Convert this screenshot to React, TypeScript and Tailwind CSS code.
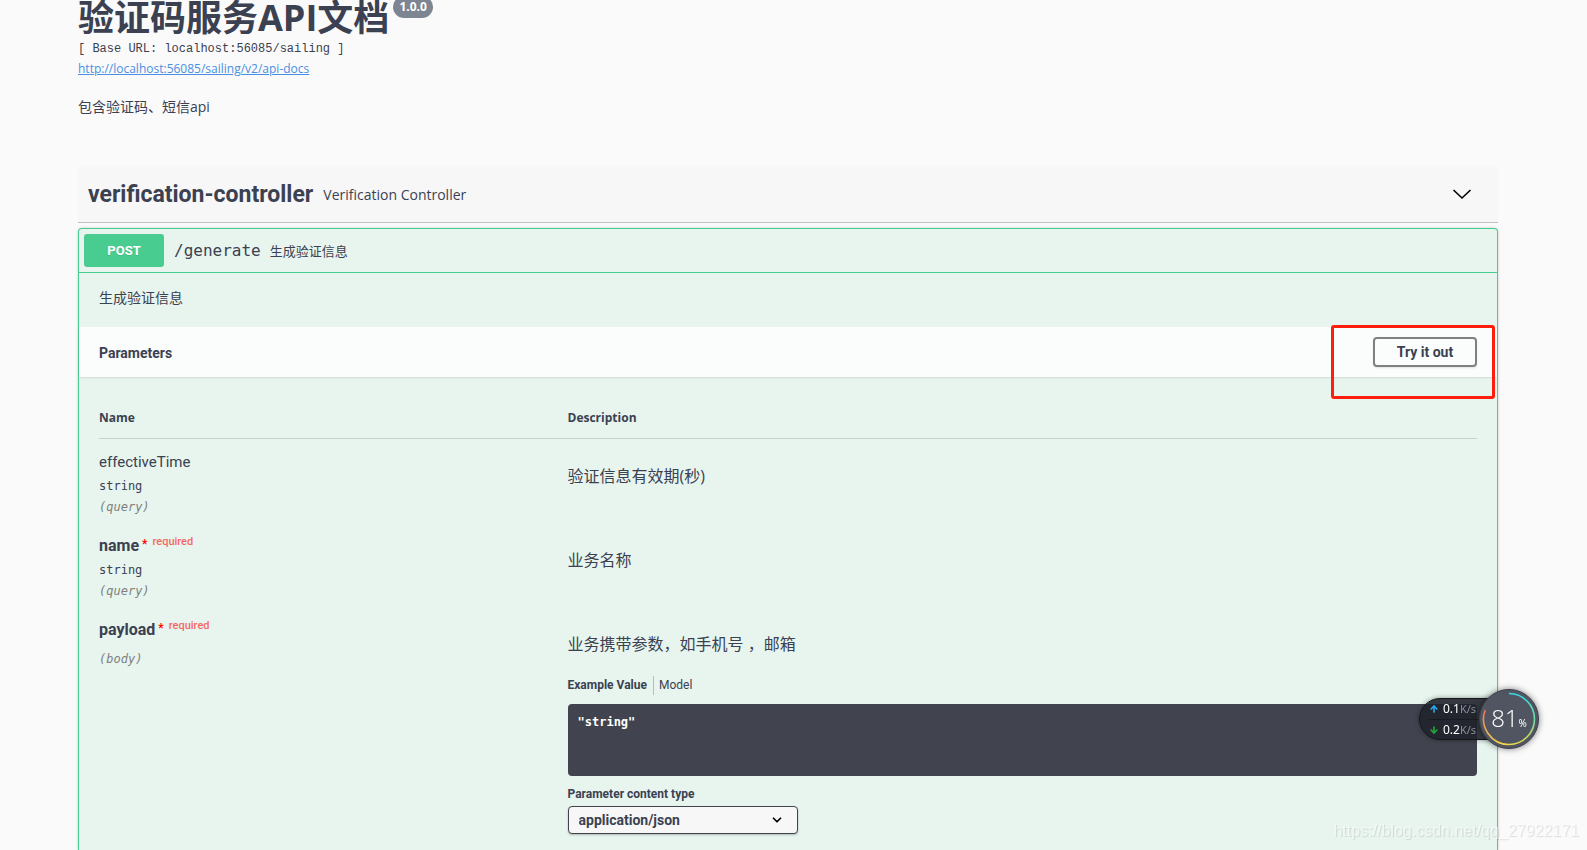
import React from "react";
import { ArrowDown, ArrowUp, ChevronDown } from "lucide-react";

interface Param {
	name: string;
	type?: string;
	location: string;
	required?: boolean;
	description: string;
}

const params: Param[] = [
	{
		name: "effectiveTime",
		type: "string",
		location: "query",
		description: "验证信息有效期(秒)",
	},
	{
		name: "name",
		type: "string",
		location: "query",
		required: true,
		description: "业务名称",
	},
	{
		name: "payload",
		location: "body",
		required: true,
		description: "业务携带参数，如手机号 ，邮箱",
	},
];

const ApiInfo = () => (
	<header className="pb-[49px]">
		<div className="flex items-start gap-1">
			<h1 className="text-[36px] leading-[35px] font-bold">
				验证码服务API文档
			</h1>
			<span className="-mt-1 rounded-full bg-[#7d8492] px-[6px] text-[12px] leading-[22px] font-bold text-white">
				1.0.0
			</span>
		</div>
		<pre className="mt-1 font-['Liberation_Mono',monospace] text-[12px] leading-5">
			[ Base URL: localhost:56085/sailing ]
		</pre>
		<a
			href="#api-docs"
			className="block w-fit text-[12px] leading-5 text-[#4990e2] underline"
		>
			http://localhost:56085/sailing/v2/api-docs
		</a>
		<p className="mt-[18px] text-[14px] leading-5">包含验证码、短信api</p>
	</header>
);

const TagHeader = () => (
	<div className="flex h-[57px] items-center border-b border-[#3b4151]/30 bg-[#f7f7f7] pr-6 pl-[10px]">
		<h2 className="pt-[2px] font-[Roboto,sans-serif] text-[23px] leading-7 font-bold">
			verification-controller
		</h2>
		<p className="ml-[10px] flex-1 pt-[2px] text-[14px] leading-5">
			Verification Controller
		</p>
		<button type="button" aria-label="Collapse operations">
			<svg width="24" height="24" viewBox="0 0 24 24" fill="none">
				<path d="M3.5 8 L12 16 L20.5 8" stroke="#000" strokeWidth="1.6" />
			</svg>
		</button>
	</div>
);

const ParamName = ({ param }: { param: Param }) => (
	<div className="font-[Roboto,sans-serif]">
		<div
			className={
				param.required
					? "flex text-[16px] leading-6 font-bold"
					: "flex text-[15px] leading-6"
			}
		>
			{param.name}
			{param.required && (
				<>
					<span className="ml-[3px] text-[12px] leading-5 text-[#ff0000]">
						*
					</span>
					<span className="ml-[5px] text-[11px] leading-4 font-medium text-[#ff0000]/60">
						required
					</span>
				</>
			)}
		</div>
		{param.type ? (
			<div className="font-['DejaVu_Sans_Mono',monospace] text-[12px] leading-6">
				{param.type}
			</div>
		) : (
			<div className="h-2" />
		)}
		<div className="font-['DejaVu_Sans_Mono',monospace] text-[12px] leading-[18px] text-[#808080] italic">
			({param.location})
		</div>
	</div>
);

const BodyExample = () => (
	<div className="font-[Roboto,sans-serif]">
		<div className="mt-5 flex text-[12px] leading-[19px]">
			<button
				type="button"
				className="border-r border-[#3b4151]/30 pr-[6px] font-bold"
			>
				Example Value
			</button>
			<button type="button" className="pl-[5px]">
				Model
			</button>
		</div>
		<pre className="mt-[9px] h-[72px] rounded-[4px] bg-[#41444e] p-[10px] font-['DejaVu_Sans_Mono',monospace] text-[12px] leading-4 font-bold text-white">
			"string"
		</pre>
		<label
			htmlFor="content-type"
			className="mt-[10px] block text-[12px] leading-4 font-bold"
		>
			Parameter content type
		</label>
		<div className="relative mt-1 w-[230px]">
			<select
				id="content-type"
				className="h-7 w-full appearance-none rounded-[4px] border border-[#41444e] bg-[#f7f7f7] pl-[10px] text-[14px] leading-5 font-bold shadow-[0_1px_2px_0_rgba(0,0,0,0.25)]"
			>
				<option>application/json</option>
			</select>
			<ChevronDown
				size={14}
				strokeWidth={3}
				className="pointer-events-none absolute top-[7px] right-[14px] text-black"
			/>
		</div>
	</div>
);

const ParamTable = () => (
	<div className="px-5 pt-5">
		<table className="w-full table-fixed text-left">
			<thead>
				<tr className="border-b border-[#3b4151]/20 text-[12px] leading-4">
					<th className="w-[34%] pt-[13px] pb-3 font-bold">Name</th>
					<th className="pt-[13px] pb-3 font-bold">Description</th>
				</tr>
			</thead>
			<tbody>
				{params.map((param) => (
					<tr key={param.name} className="align-top">
						<td className="pt-[11px] pb-[7px]">
							<ParamName param={param} />
						</td>
						<td className="pt-[25px] text-[16px] leading-6">
							<p>{param.description}</p>
							{param.location === "body" && <BodyExample />}
						</td>
					</tr>
				))}
			</tbody>
		</table>
	</div>
);

const Operation = () => (
	<section className="mt-[5px] flex-1 rounded-t-[4px] border border-b-0 border-[#49cc90] bg-[#e7f5ee] shadow-[0_0_3px_rgba(0,0,0,0.19)]">
		<div className="flex items-center border-b border-[#49cc90] p-[5px]">
			<button
				type="button"
				className="h-[33px] w-20 rounded-[3px] bg-[#49cc90] pt-px font-[Roboto,sans-serif] text-[13px] font-bold text-white [text-shadow:0_1px_0_rgba(0,0,0,0.1)]"
			>
				POST
			</button>
			<span className="ml-[10px] pt-px font-['DejaVu_Sans_Mono',monospace] text-[16px] leading-6">
				/generate
			</span>
			<span className="ml-[9px] text-[13px] leading-5">生成验证信息</span>
		</div>
		<p className="px-5 pt-[15px] pb-[19px] text-[14px] leading-5">
			生成验证信息
		</p>
		<div className="relative flex h-[50px] items-center justify-between bg-white/80 px-5 font-[Roboto,sans-serif] text-[14px] font-bold shadow-[0_1px_2px_rgba(0,0,0,0.1)]">
			<h4 className="pt-[2px]">Parameters</h4>
			<button
				type="button"
				className="h-[30px] w-[104px] rounded-[4px] border-2 border-[#808080] shadow-[0_1px_2px_rgba(0,0,0,0.1)]"
			>
				Try it out
			</button>
			<div className="pointer-events-none absolute -top-[2px] right-[2px] h-[74px] w-[164px] rounded-[3px] border-3 border-[#ff1d0d]" />
		</div>
		<ParamTable />
	</section>
);

const NetworkMonitor = () => (
	<aside className="fixed right-12 bottom-[101px] flex items-center font-['Noto_Sans',sans-serif]">
		<div className="-mr-8 h-[42px] w-[92px] rounded-l-full border border-[#15171d] bg-[#20232c]/90 pl-[9px] text-[12px] leading-5 text-white shadow-[0_0_5px_rgba(0,0,0,0.4)]">
			<div className="flex items-center border-b border-black/30">
				<ArrowUp size={10} strokeWidth={4} className="text-[#2ba4e8]" />
				<span className="ml-1">0.1</span>
				<span className="text-[11px] text-[#8b8e96]">K/s</span>
			</div>
			<div className="flex items-center">
				<ArrowDown size={10} strokeWidth={4} className="text-[#25a338]" />
				<span className="ml-1">0.2</span>
				<span className="text-[11px] text-[#8b8e96]">K/s</span>
			</div>
		</div>
		<div className="relative flex size-[60px] items-center justify-center rounded-full border border-[#3c404b] bg-[#505561] text-white shadow-[0_0_6px_rgba(0,0,0,0.5)]">
			<svg
				className="absolute inset-0"
				viewBox="0 0 58 58"
				fill="none"
				strokeWidth="1.6"
			>
				<defs>
					<linearGradient id="ring-right" x1="0" y1="0" x2="0" y2="1">
						<stop offset="0" stopColor="#37d8e6" />
						<stop offset="0.5" stopColor="#6fe0a8" />
						<stop offset="1" stopColor="#e8dc45" />
					</linearGradient>
					<linearGradient id="ring-left" x1="0" y1="0" x2="0" y2="1">
						<stop offset="0" stopColor="#f0705c" />
						<stop offset="1" stopColor="#f0d648" />
					</linearGradient>
				</defs>
				<path d="M29 3.5 A25.5 25.5 0 0 1 29 54.5" stroke="url(#ring-right)" />
				<path d="M29 54.5 A25.5 25.5 0 0 1 5.2 20" stroke="url(#ring-left)" />
			</svg>
			<span className="relative -mt-[2px] font-['Open_Sans',sans-serif] text-[24px] leading-7 font-light">
				81
			</span>
			<span className="relative mt-2 text-[10px] leading-3">%</span>
		</div>
	</aside>
);

const App = () => {
	return (
		<div className="flex min-h-screen flex-col overflow-hidden bg-[#fafafa] pr-[11px] font-['Open_Sans','Noto_Sans_CJK_SC',sans-serif] text-[#3b4151]">
			<main className="mx-auto flex w-full max-w-[1460px] flex-1 flex-col px-5">
				<ApiInfo />
				<TagHeader />
				<Operation />
			</main>
			<NetworkMonitor />
			<div className="pointer-events-none fixed right-2 bottom-[7px] font-['Liberation_Sans',sans-serif] text-[16px] leading-6 text-white/60 [text-shadow:1px_1px_1px_rgba(0,0,0,0.12)]">
				https://blog.csdn.net/qq_27922171
			</div>
		</div>
	);
};

export default App;
